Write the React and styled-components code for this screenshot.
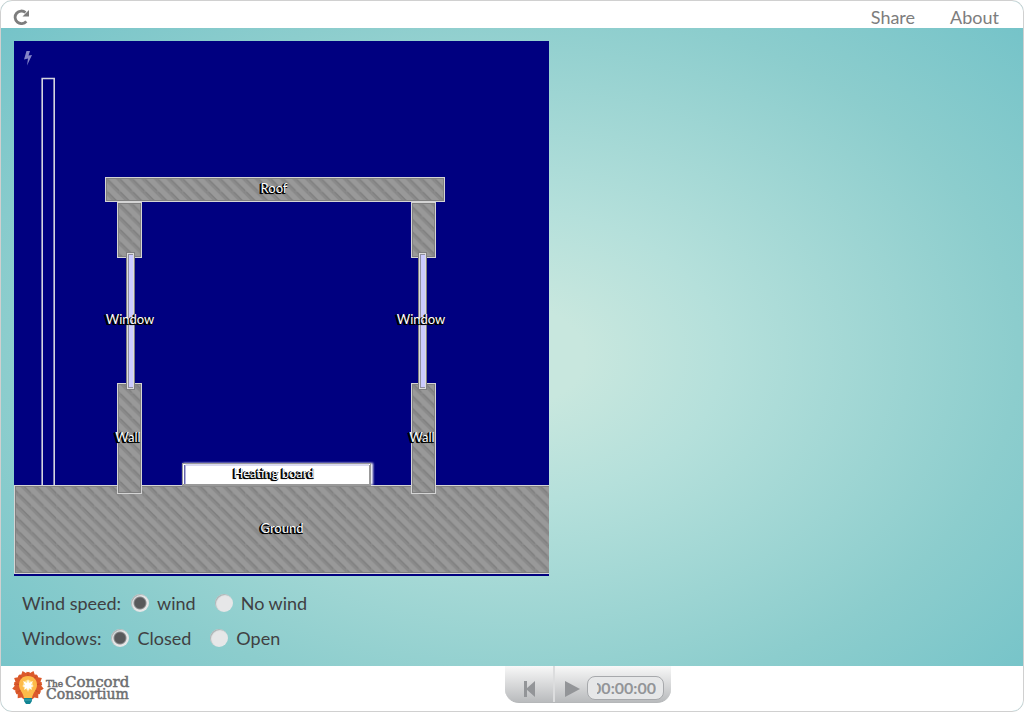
import React, { useState } from "react";
import styled, { createGlobalStyle } from "styled-components";

const GlobalStyle = createGlobalStyle`
  * { box-sizing: border-box; }
  html, body { margin: 0; background: #fff; }
  body { font-family: Lato, "Liberation Sans", sans-serif; color: #404042; }
`;

const Frame = styled.div`
  min-height: 100vh;
  display: flex;
  flex-direction: column;
  overflow: hidden;
  border: 1px solid #d0d0d0;
  border-radius: 12px;
  background: radial-gradient(ellipse farthest-corner at center, #c8e7de 10%, #b5e0db 29%, #8ccdcd 70%, #72c2c8 100%);
`;

const TopBar = styled.header`
  height: 27px;
  flex: none;
  display: flex;
  align-items: center;
  justify-content: space-between;
  padding: 5px 24px 0 12px;
  background: #fff;
`;

const ReloadButton = styled.button`
  width: 17px;
  height: 16px;
  padding: 0;
  border: 0;
  background: none;
  display: block;
  svg { display: block; }
`;

const Links = styled.nav`
  display: flex;
  gap: 35px;
`;

const TopLink = styled.a`
  font-size: 18px;
  line-height: 22px;
  color: #7d7d7d;
  text-decoration: none;
`;

const Stage = styled.main`
  flex: 1;
  padding: 13px;
`;

const Model = styled.svg`
  display: block;
  width: 535px;
  height: 535px;
`;

const ModelText = styled.text`
  font-family: Lato, "Liberation Sans", sans-serif;
  font-size: 13px;
  text-anchor: middle;
  fill: #fff;
  text-shadow: -1px 0 #000, -1px 1px #000, -2px 1px #000, 0 1px #000, -1px 1px 1px #000;
`;

const Controls = styled.div`
  display: flex;
  flex-direction: column;
  gap: 11px;
  padding: 15px 8px 0;
`;

const RadioRow = styled.fieldset`
  display: flex;
  align-items: center;
  margin: 0;
  padding: 0;
  border: 0;
  font-size: 18px;
  line-height: 24px;
`;

const RowTitle = styled.span`
  margin-right: 10px;
`;

const Option = styled.label`
  display: flex;
  align-items: center;
  gap: 8px;
  margin-right: 19px;
`;

const Radio = styled.input`
  appearance: none;
  width: 18px;
  height: 18px;
  margin: 0;
  border-radius: 50%;
  background: #e6e7e8;
  box-shadow: inset 1px 1px 1px #a9b3b4;
  &:checked {
    background: radial-gradient(circle, #58595b 0 5px, #8b8c8e 6px, #e6e7e8 7px);
  }
`;

const BottomBar = styled.footer`
  height: 45px;
  flex: none;
  display: grid;
  grid-template-columns: 1fr auto 1fr;
  padding: 0 11px;
  background: #fff;
`;

const LogoLink = styled.a`
  display: block;
  padding-top: 3px;
  svg { display: block; }
`;

const Player = styled.div`
  grid-column: 2;
  display: flex;
  width: 166px;
  height: 37px;
  margin-left: 152px;
  border-radius: 0 0 14px 14px;
  background: linear-gradient(#f8f8f8, #b9bbbd);
  border-bottom: 1px solid #b5b7b9;
`;

const PlayerButton = styled.button`
  width: ${(p) => p.$width};
  padding: 9px 0 0 ${(p) => p.$inset};
  border: 0;
  border-right: ${(p) => (p.$divided ? "2px solid #dcddde" : "0")};
  background: none;
  text-align: left;
  svg { display: block; }
`;

const Clock = styled.output`
  display: flex;
  justify-content: flex-end;
  align-items: center;
  width: 77px;
  height: 24px;
  margin-top: 10px;
  padding-right: 7px;
  border: 1px solid #a7a9ac;
  border-radius: 8px;
  background: #e6e7e8;
`;

const ClockText = styled.span`
  width: 59px;
  display: flex;
  justify-content: flex-end;
  overflow: hidden;
  font-size: 16px;
  line-height: 20px;
  font-weight: 700;
  color: #939598;
`;

function Block({ x, y, w, h }) {
  return (
    <g shapeRendering="crispEdges">
      <rect x={x + 0.5} y={y + 0.5} width={w - 1} height={h - 1} fill="url(#hatch)" stroke="#d4d4d4" />
      <rect x={x + 1.5} y={y + 1.5} width={w - 3} height={h - 3} fill="none" stroke="#808080" />
    </g>
  );
}

function Pane({ x, y, w, h }) {
  return (
    <g shapeRendering="crispEdges">
      <rect x={x} y={y} width={w} height={h} fill="#808080" />
      <rect x={x + 1} y={y + 1} width={w - 2} height={h - 2} fill="#dcdcdc" />
      <rect x={x + 2} y={y + 2} width={w - 4} height={h - 4} fill="#9090a0" />
      <rect x={x + 3} y={y + 3} width={w - 5} height={h - 6} fill="#ccf" />
    </g>
  );
}

function HouseModel() {
  return (
    <Model viewBox="0 0 535 535" role="img" aria-label="Heated house model">
      <defs>
        <pattern id="hatch" x="4" width="12" height="12" patternUnits="userSpaceOnUse" patternTransform="scale(1.05)">
          <rect width="12" height="12" fill="#999" />
          <path d="M-3 -3L15 15M-3 9L3 15M9 -3L15 3" stroke="#8a8a8a" strokeWidth="3.600" />
          <path d="M-3 -4.500L16.500 15M-4.500 9L4.500 18M7.500 -4.500L16.500 4.500" stroke="#7e7e7e" strokeWidth="1" />
        </pattern>
        <filter id="glow" x="-10%" y="-60%" width="120%" height="220%">
          <feGaussianBlur stdDeviation="1.2" />
        </filter>
      </defs>
      <rect width="535" height="535" fill="#000080" />
      <path d="M12.500 10H16L14.500 14.500L18 14L13 24.500L14 17.500L10 18.500Z" fill="#8585c8" />
      <path d="M28.200 444V37.500H40.200V444" fill="none" stroke="#d5d5df" strokeWidth="1.600" />
      <Block x={0} y={444} w={537} h={89} />
      <Block x={91} y={136} w={340} h={25} />
      <Block x={103} y={161} w={25} h={56} />
      <Block x={397} y={161} w={25} h={56} />
      <Block x={103} y={342} w={25} h={111} />
      <Block x={397} y={342} w={25} h={111} />
      <Pane x={112} y={211} w={9} h={138} />
      <Pane x={404} y={211} w={9} h={138} />
      <rect x="169" y="422" width="190" height="22" fill="#fff" filter="url(#glow)" />
      <rect x="168" y="422" width="189" height="23" fill="#999" />
      <rect x="169" y="423" width="187" height="20" fill="#fff" />
      <path d="M170.500 443V424" stroke="#6666a8" />
      <path d="M171.500 443V424H355" fill="none" stroke="#b4b4e0" />
      <path d="M355.500 424V443" stroke="#999" />
      <ModelText x={260} y={152}>Roof</ModelText>
      <ModelText x={116} y={283}>Window</ModelText>
      <ModelText x={407} y={283}>Window</ModelText>
      <ModelText x={114} y={401}>Wall</ModelText>
      <ModelText x={408} y={401}>Wall</ModelText>
      <ModelText x={260} y={437}>Heating board</ModelText>
      <ModelText x={268} y={492}>Ground</ModelText>
    </Model>
  );
}

function RadioGroup({ title, name, options }) {
  const [value, setValue] = useState(options[0]);
  return (
    <RadioRow aria-label={title}>
      <RowTitle>{title}</RowTitle>
      {options.map((o) => (
        <Option key={o}>
          <Radio type="radio" name={name} checked={value === o} onChange={() => setValue(o)} />
          {o}
        </Option>
      ))}
    </RadioRow>
  );
}

const PETALS = [20, 60, 100, 140, 220, 260, 300, 340];

function Logo() {
  return (
    <svg width="120" height="38" viewBox="0 0 120 38" role="img" aria-label="The Concord Consortium">
      {PETALS.map((a) => (
        <path key={a} d="M9 16L10 4L13.500 4L16 1L18.500 4L22 4L23 16Z" fill="#dc5a2b" transform={`rotate(${a} 16 17)`} />
      ))}
      {PETALS.map((a) => (
        <path key={a} d="M16 16L10.500 4L13 8L16 12L19 8L21.500 4Z" fill="#c44a25" transform={`rotate(${a} 16 17)`} />
      ))}
      <path d="M16 7C10 7 7 11 7 16c0 5 4 7 5 13h8c1-6 5-8 5-13 0-5-3-9-9-9z" fill="#fdbb4a" />
      <circle cx="16" cy="16" r="5" fill="#fee08c" />
      <path d="M16 10l1 4 4-2-2 4 3 1-3 1 1 3-3-2-1 4-1-4-3 2 1-3-3-1 3-1-2-4 4 2z" fill="#fff" />
      <path d="M12 29h8v3l-2 3h-4l-2-3z" fill="#118493" />
      <path d="M12 31h8" stroke="#4ca8b0" />
      <g fontFamily="'DejaVu Serif', serif" fill="#6d6e70" stroke="#6d6e70" strokeWidth="0.500">
        <text x="34" y="18" fontSize="9">The</text>
        <text x="53" y="18" fontSize="15">Concord</text>
        <text x="34" y="30" fontSize="14">Consortium</text>
      </g>
    </svg>
  );
}

export default function App() {
  return (
    <>
      <GlobalStyle />
      <Frame>
        <TopBar>
          <ReloadButton aria-label="Reload">
            <svg width="17" height="16" viewBox="0 0 17 16">
              <path d="M13.300 12.300A6.300 6.300 0 1 1 12.500 3.500" fill="none" stroke="#7d7d7d" strokeWidth="2.800" />
              <path d="M16 1v6.500H9.500z" fill="#7d7d7d" />
            </svg>
          </ReloadButton>
          <Links>
            <TopLink href="#share">Share</TopLink>
            <TopLink href="#about">About</TopLink>
          </Links>
        </TopBar>
        <Stage>
          <HouseModel />
          <Controls>
            <RadioGroup title="Wind speed:" name="wind" options={["wind", "No wind"]} />
            <RadioGroup title="Windows:" name="windows" options={["Closed", "Open"]} />
          </Controls>
        </Stage>
        <BottomBar>
          <LogoLink href="#home"><Logo /></LogoLink>
          <Player>
            <PlayerButton $width="50px" $inset="19px" $divided aria-label="Reset">
              <svg width="12" height="28" viewBox="0 0 12 28">
                <path d="M0 6h3v16H0zM11 6v16L2 14z" fill="#939598" />
              </svg>
            </PlayerButton>
            <PlayerButton $width="32px" $inset="10px" aria-label="Play">
              <svg width="16" height="28" viewBox="0 0 16 28">
                <path d="M0 6v16l15-8z" fill="#939598" />
              </svg>
            </PlayerButton>
            <Clock><ClockText>00:00:00</ClockText></Clock>
          </Player>
        </BottomBar>
      </Frame>
    </>
  );
}
